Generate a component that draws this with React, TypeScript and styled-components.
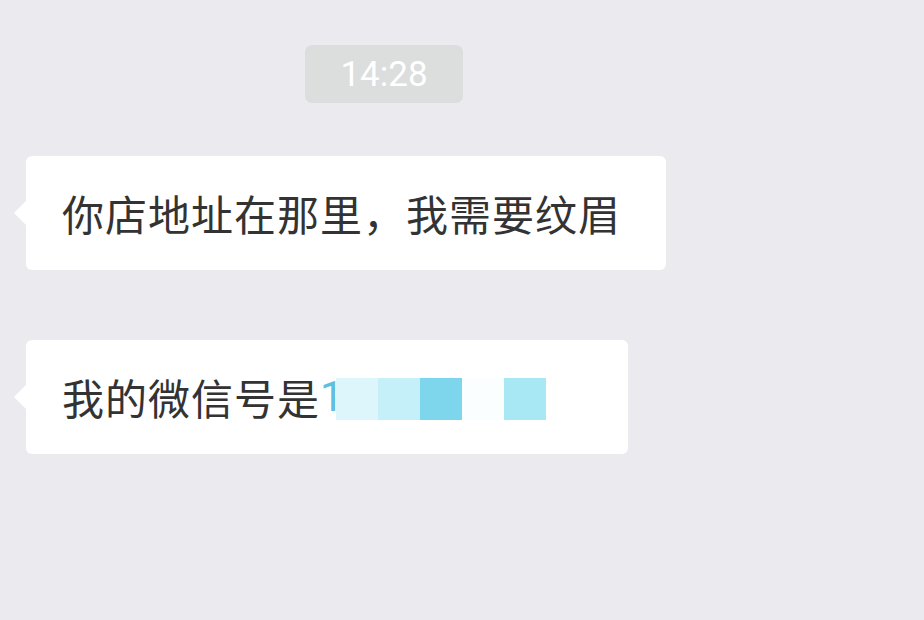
import React from "react";
import styled, { createGlobalStyle } from "styled-components";

const GlobalStyle = createGlobalStyle`
    html, body {
        margin: 0;
        padding: 0;
        background: #ebebef;
    }

    body {
        font-family: "Noto Sans CJK SC", "Noto Sans", sans-serif;
    }
`;

const Screen = styled.div`
    width: 924px;
    height: 620px;
    overflow: hidden;
    background: #ebebef;
`;

const ChatColumn = styled.div`
    width: 768px;
    padding-top: 45px;
    display: flex;
    flex-direction: column;
`;

const TimePill = styled.div`
    align-self: center;
    width: 158px;
    height: 58px;
    border-radius: 7px;
    background: #dcdddd;
    color: #ffffff;
    font-family: Roboto, "Noto Sans", sans-serif;
    font-size: 35px;
    display: flex;
    align-items: center;
    justify-content: center;
`;

interface IBubble {
    $top: number;
    $padRight: number;
}

const Bubble = styled.div<IBubble>`
    position: relative;
    align-self: flex-start;
    margin: ${({ $top }) => $top}px 0 0 26px;
    height: 114px;
    padding: 0 ${({ $padRight }) => $padRight}px 0 36px;
    box-sizing: border-box;
    background: #ffffff;
    border-radius: 6px;
    display: flex;
    align-items: center;
    color: #333333;
    font-size: 42px;
    letter-spacing: 1px;
    line-height: 1;
    white-space: nowrap;

    &::before {
        content: "";
        position: absolute;
        left: -12px;
        top: 45px;
        border-top: 12px solid transparent;
        border-bottom: 12px solid transparent;
        border-right: 12px solid #ffffff;
    }
`;

const Digit = styled.span`
    color: #5fbfe0;
    font-family: Roboto, "Noto Sans", sans-serif;
    font-weight: 400;
    letter-spacing: 0;
`;

const Mosaic = styled.span`
    display: inline-flex;
    height: 42px;
    margin: 4px 0 0 -8px;
`;

const Tile = styled.span<{ $color: string }>`
    width: 42px;
    height: 42px;
    background: ${({ $color }) => $color};
`;

const tiles = ["#dcf6fc", "#c6f0f9", "#7dd6ec", "#fafeff", "#a8e8f5", "#ffffff"];

export default function App() {
    return (
        <Screen>
            <GlobalStyle />
            <ChatColumn>
                <TimePill>14:28</TimePill>
                <Bubble $top={53} $padRight={45}>
                    你店地址在那里，我需要纹眉
                </Bubble>
                <Bubble $top={70} $padRight={40}>
                    我的微信号是<Digit>1</Digit>
                    <Mosaic>
                        {tiles.map((c, i) => (
                            <Tile key={i} $color={c} />
                        ))}
                    </Mosaic>
                </Bubble>
            </ChatColumn>
        </Screen>
    );
}
